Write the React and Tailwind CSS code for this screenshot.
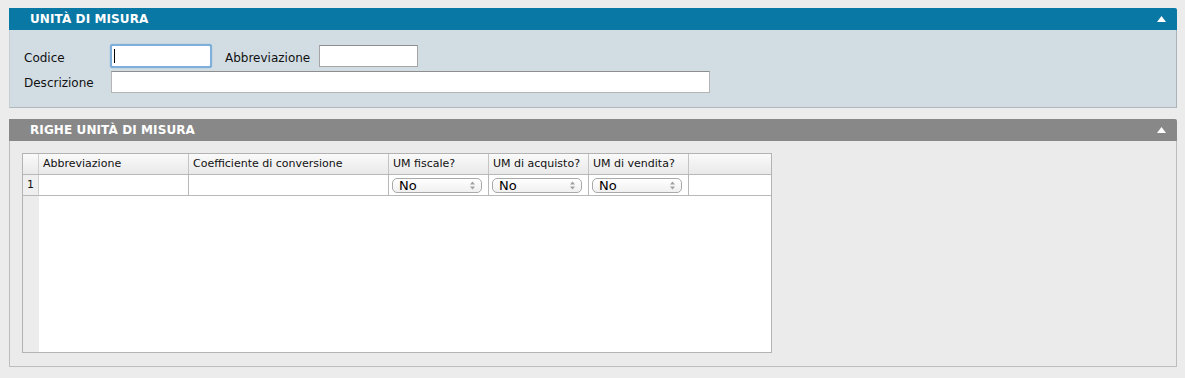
import React from 'react';

const font = { fontFamily: '"DejaVu Sans", "Liberation Sans", sans-serif' };

const Caret = () => (
  <svg width="9" height="6" viewBox="0 0 9 6" className="fill-white">
    <path d="M0 6 L4.5 0 L9 6 Z" />
  </svg>
);

const PanelHeader = ({ title, color }) => (
  <div className={`flex h-[22px] items-center justify-between pl-[21px] pr-[11px] ${color}`}>
    <span className="text-[12px] font-bold tracking-[0.1px] text-white">{title}</span>
    <Caret />
  </div>
);

const Stepper = () => (
  <svg width="5" height="9" viewBox="0 0 5 9" className="fill-[#a0a0a0]">
    <path d="M0 3.5 L2.5 0.5 L5 3.5 Z" />
    <path d="M0 5.5 L2.5 8.5 L5 5.5 Z" />
  </svg>
);

const SelectNo = () => (
  <div className="flex h-[15px] w-[90px] items-center justify-between rounded-[5px] border border-[#a9a9a9] bg-gradient-to-b from-white to-[#f0f0f0] pl-[6px] pr-[6px]">
    <span className="text-[13px] leading-none text-black">No</span>
    <Stepper />
  </div>
);

const columns = [
  { label: 'Abbreviazione', w: 'w-[150px]' },
  { label: 'Coefficiente di conversione', w: 'w-[200px]' },
  { label: 'UM fiscale?', w: 'w-[100px]', select: true },
  { label: 'UM di acquisto?', w: 'w-[100px]', select: true },
  { label: 'UM di vendita?', w: 'w-[100px]', select: true },
  { label: '', w: 'flex-1' },
];

export default function App() {
  return (
    <div className="h-[378px] w-[1185px] bg-[#ececec] pt-2 pl-[9px] text-[#111]" style={font}>
      {/* Unità di misura */}
      <div className="w-[1168px] overflow-hidden rounded-tr-[2px]">
        <PanelHeader title="UNITÀ DI MISURA" color="bg-[#0a78a4]" />
        <div className="h-[78px] border-r border-b border-l border-r-[#a9b3b8] border-b-[#b0b8bc] border-l-[#c5cfd4] bg-[#d2dde3] pt-[14px] pl-[14px]">
          <div className="flex h-[24px] items-center">
            <span className="w-[86px] pt-[3px] text-[12px]">Codice</span>
            <div className="flex h-[24px] w-[102px] items-center rounded-[3px] border-[2px] border-[#7fb0dc] bg-white pl-[2px] shadow-[0_0_1px_#5a8fc8]">
              <span className="h-[14px] w-px bg-black" />
            </div>
            <span className="ml-[13px] w-[94px] pt-[3px] text-[12px]">Abbreviazione</span>
            <div className="h-[22px] w-[99px] border border-[#a5a5a5] border-t-[#8e8e8e] bg-white" />
          </div>
          <div className="mt-[3px] flex h-[22px] items-center">
            <span className="w-[87px] pt-[2px] text-[12px]">Descrizione</span>
            <div className="h-[22px] w-[599px] border border-[#b5b5b5] border-t-[#8e8e8e] bg-white" />
          </div>
        </div>
      </div>

      {/* Righe unità di misura */}
      <div className="mt-[11px] w-[1168px] overflow-hidden rounded-tr-[2px]">
        <PanelHeader title="RIGHE UNITÀ DI MISURA" color="bg-[#888888]" />
        <div className="h-[226px] border-r border-b border-l border-[#bdbdbd] bg-[#ebebeb] pt-[12px] pl-[12px]">
          <div className="flex h-[200px] w-[750px] flex-col border border-[#b3b3b3] bg-white">
            {/* header row */}
            <div className="flex h-[21px] border-b border-[#b8b8b8] bg-gradient-to-b from-[#fafafa] to-[#e9e9e9]">
              <div className="w-[16px] border-r border-[#d0d0d0]" />
              {columns.map((c, i) => (
                <div
                  key={i}
                  className={`${c.w} flex items-center border-r border-[#c4c4c4] pl-[4px] text-[11px] last:border-r-0`}
                >
                  {c.label}
                </div>
              ))}
            </div>
            {/* row 1 */}
            <div className="flex h-[21px] border-b border-[#b8b8b8]">
              <div className="flex w-[16px] items-center border-r border-[#d0d0d0] bg-[#efefef] pl-[4px] text-[11px]">
                1
              </div>
              {columns.map((c, i) => (
                <div
                  key={i}
                  className={`${c.w} flex items-center border-r border-[#b8b8b8] pl-[3px] last:border-r-0`}
                >
                  {c.select && <SelectNo />}
                </div>
              ))}
            </div>
            <div className="flex flex-1">
              <div className="w-[16px] bg-[#ececec]" />
              <div className="flex-1 bg-white" />
            </div>
          </div>
        </div>
      </div>
    </div>
  );
}
